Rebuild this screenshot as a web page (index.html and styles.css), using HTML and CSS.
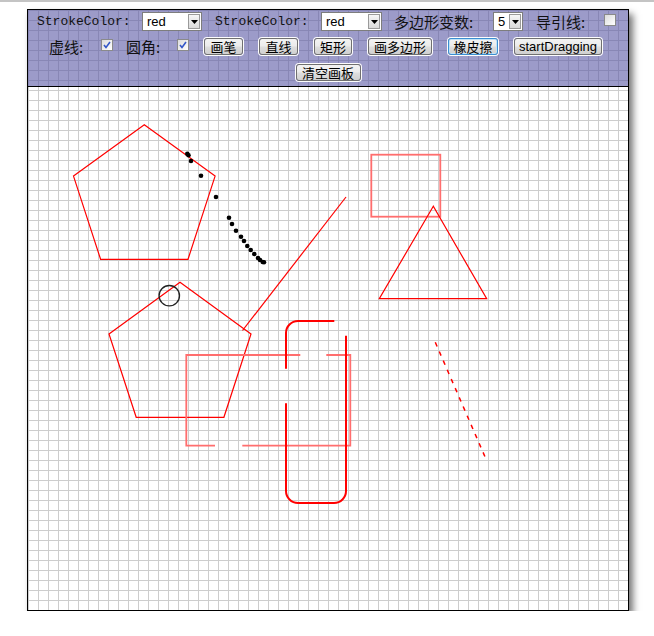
FILE: index.html
```html
<!DOCTYPE html>
<html>
<head>
<meta charset="utf-8">
<title>Canvas Paint</title>
<link rel="stylesheet" href="styles.css">
</head>
<body>
<div class="board">
  <div class="toolbar">
    <div class="row row1">
      <span class="lbl mono l-stroke">StrokeColor:</span>
      <span class="select s60"><span class="val">red</span><span class="arrow"><svg width="7" height="4" viewBox="0 0 7 4"><polygon points="0,0 7,0 3.5,4" fill="#000"/></svg></span></span>
      <span class="lbl mono l-stroke2">StrokeColor:</span>
      <span class="select s61"><span class="val">red</span><span class="arrow"><svg width="7" height="4" viewBox="0 0 7 4"><polygon points="0,0 7,0 3.5,4" fill="#000"/></svg></span></span>
      <span class="lbl cjk l-sides">多边形变数:</span>
      <span class="select s30"><span class="val">5</span><span class="arrow"><svg width="7" height="4" viewBox="0 0 7 4"><polygon points="0,0 7,0 3.5,4" fill="#000"/></svg></span></span>
      <span class="lbl cjk l-guide">导引线:</span>
      <span class="check"></span>
    </div>
    <div class="row row2">
      <span class="lbl cjk l-dash">虚线:</span>
      <span class="check on"><svg width="8" height="8" viewBox="0 0 8 8"><path d="M1 4 L3 6.5 L7 1" fill="none" stroke="#3357c8" stroke-width="1.6"/></svg></span>
      <span class="lbl cjk l-round">圆角:</span>
      <span class="check on"><svg width="8" height="8" viewBox="0 0 8 8"><path d="M1 4 L3 6.5 L7 1" fill="none" stroke="#3357c8" stroke-width="1.6"/></svg></span>
      <button class="btn w41 first">画笔</button>
      <button class="btn w41">直线</button>
      <button class="btn w40">矩形</button>
      <button class="btn w66">画多边形</button>
      <button class="btn w52 active">橡皮擦</button>
      <button class="btn w90 latin">startDragging</button>
    </div>
    <div class="row row3">
      <button class="btn w67">清空画板</button>
    </div>
  </div>
  <svg class="canvas" width="600" height="523" viewBox="0 0 600 523">
    <g transform="translate(-28 -87)">
      <polygon points="144.3,124.7 215.1,176.1 188,259.3 100.6,259.3 73.5,176.1" fill="none" stroke="#ff0000" stroke-width="1.2"/>
      <polygon points="180,282.3 251,333.9 223.9,417.3 136.2,417.3 109,333.9" fill="none" stroke="#ff0000" stroke-width="1.2"/>
      <circle cx="169.3" cy="295.7" r="10.2" fill="none" stroke="#222" stroke-width="1.3"/>
      <line x1="346" y1="197" x2="242.5" y2="330.5" stroke="#ff0000" stroke-width="1.2"/>
      <g fill="none" stroke="#ff6e6e" stroke-width="1.8">
        <path d="M300.3 355 H186.3 V445.7 H215"/>
        <path d="M326.3 355 H350.3 V445.7 H242.3"/>
        <rect x="371.3" y="154.7" width="69" height="62"/>
      </g>
      <polygon points="433.3,206.3 379.3,298.7 486.7,298.7" fill="none" stroke="#ff0000" stroke-width="1.2"/>
      <g fill="none" stroke="#ff0000" stroke-width="2">
        <path d="M286 368.7 V333 A12 12 0 0 1 298 321 H334.3"/>
        <path d="M286 403.3 V491 A12 12 0 0 0 298 503 H334 A12 12 0 0 0 346 491 V335.7"/>
      </g>
      <line x1="435.3" y1="342.3" x2="486.7" y2="460.7" stroke="#ff0000" stroke-width="1.5" stroke-dasharray="4.5 5.5"/>
      <g fill="#000">
        <circle cx="187.3" cy="153.7" r="2.3"/>
        <circle cx="188.5" cy="155.3" r="2.3"/>
        <circle cx="191" cy="161" r="2.3"/>
        <circle cx="201" cy="175.7" r="2.3"/>
        <circle cx="216" cy="197" r="2.3"/>
        <circle cx="229" cy="217.7" r="2.3"/>
        <circle cx="232" cy="224" r="2.3"/>
        <circle cx="236" cy="230.7" r="2.3"/>
        <circle cx="241" cy="236.7" r="2.3"/>
        <circle cx="244" cy="241" r="2.3"/>
        <circle cx="247.3" cy="246" r="2.3"/>
        <circle cx="250.7" cy="250" r="2.3"/>
        <circle cx="254.3" cy="254" r="2.3"/>
        <circle cx="258" cy="258" r="2.3"/>
        <circle cx="260" cy="260" r="2.3"/>
        <circle cx="262.7" cy="262" r="2.3"/>
        <circle cx="264" cy="262.3" r="2.3"/>
      </g>
    </g>
  </svg>
</div>
</body>
</html>
```

FILE: styles.css
```css
html, body {
  margin: 0;
  padding: 0;
  background: #fff;
}

body {
  border-top: 2px solid #c4c4c4;
  font-family: "Liberation Sans", "Noto Sans CJK SC", sans-serif;
}

.board {
  width: 600px;
  height: 600px;
  margin: 7px 0 0 27px;
  border: 1px solid #000;
  background-color: #fff;
  background-image:
    linear-gradient(to right, #cdcdcd 1px, transparent 1px),
    linear-gradient(to bottom, #cdcdcd 1px, transparent 1px);
  background-size: 10px 10px;
  box-shadow: 4px 5px 7px rgba(0, 0, 0, 0.55);
}

.toolbar {
  height: 76px;
  border-bottom: 1px solid #000;
  background: rgba(90, 88, 165, 0.6);
  display: flex;
  flex-direction: column;
}

.row {
  display: flex;
  align-items: center;
  height: 19px;
}

.row1 {
  margin-top: 2px;
  padding-left: 9px;
}

.row2 {
  margin-top: 6px;
  padding-left: 21px;
}

.row3 {
  margin-top: 7px;
  justify-content: center;
}

.lbl {
  color: #111;
  white-space: nowrap;
  line-height: 19px;
}

.mono {
  font-family: "Liberation Mono", "DejaVu Sans Mono", monospace;
  font-size: 13px;
}

.cjk {
  font-family: "Noto Sans CJK SC", sans-serif;
  font-size: 15px;
}

.l-stroke { width: 105px; }
.l-stroke2 { width: 106px; margin-left: 13px; }
.l-sides { width: 99px; margin-left: 12px; }
.l-guide { width: 68px; margin-left: 13px; }
.l-dash { width: 52px; }
.l-round { width: 51px; margin-left: 13px; }

.select {
  box-sizing: border-box;
  height: 19px;
  display: flex;
  align-items: stretch;
  border: 1px solid #7d7d7d;
  background: #fff;
  padding: 1px;
}

.s60 { width: 60px; }
.s61 { width: 61px; }
.s30 { width: 30px; }

.val {
  flex: 1;
  font-family: "Liberation Sans", sans-serif;
  font-size: 13px;
  line-height: 15px;
  padding-left: 3px;
  color: #000;
}

.arrow {
  box-sizing: border-box;
  width: 12px;
  border: 1px solid #9a9a9a;
  background: linear-gradient(#f7f7f7, #d9d9d9);
  display: flex;
  align-items: center;
  justify-content: center;
}

.check {
  box-sizing: border-box;
  width: 12px;
  height: 12px;
  margin-bottom: 4px;
  border: 1px solid #8a8a8a;
  background: linear-gradient(135deg, #dcdcdc, #ffffff);
  display: flex;
  align-items: center;
  justify-content: center;
}

.btn {
  box-sizing: border-box;
  height: 17px;
  margin: 1px 1px 1px 15px;
  padding: 0;
  border: 1px solid #707070;
  border-radius: 3px;
  box-shadow: 0 0 0 1px #fdfdfd;
  background: linear-gradient(#f3f3f3 0%, #ebebeb 48%, #dedede 52%, #d0d0d0 100%);
  font-family: "Noto Sans CJK SC", sans-serif;
  font-size: 13px;
  line-height: 15px;
  color: #000;
  text-align: center;
}

.btn.first { margin-left: 15px; }
.row3 .btn { margin-left: 1px; }

.btn.latin {
  font-family: "Liberation Sans", sans-serif;
}

.btn.active {
  border-color: #3c8fd0;
  box-shadow: 0 0 0 1px #fdfdfd, inset 0 0 0 1px #bfe3f8;
}

.w41 { width: 39px; }
.w40 { width: 38px; }
.w66 { width: 64px; }
.w52 { width: 50px; }
.w90 { width: 88px; }
.w67 { width: 65px; }

.canvas {
  display: block;
}
```
